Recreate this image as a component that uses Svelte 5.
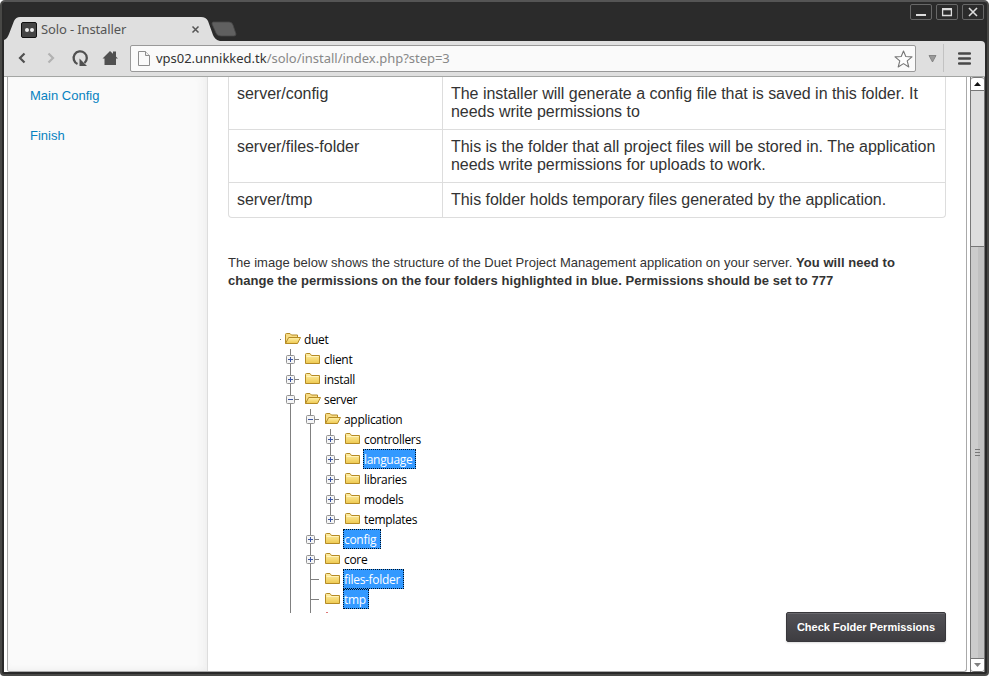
<script>
  const links = ['Main Config', 'Finish'];
  const folders = [
    ['server/config', 'The installer will generate a config file that is saved in this folder. It needs write permissions to'],
    ['server/files-folder', 'This is the folder that all project files will be stored in. The application needs write permissions for uploads to work.'],
    ['server/tmp', 'This folder holds temporary files generated by the application.']
  ];
  // cells: p = plus, m = minus, P = plus on the last child, l = vertical guide, t = branch without a toggle
  const tree = [
    { name: 'duet', cells: '', open: true, w: 24 },
    { name: 'client', cells: 'p', w: 29 },
    { name: 'install', cells: 'p', w: 31 },
    { name: 'server', cells: 'm', open: true, w: 31 },
    { name: 'application', cells: 'lm', open: true, w: 59 },
    { name: 'controllers', cells: 'llp', w: 56 },
    { name: 'language', cells: 'llp', hot: true, w: 49 },
    { name: 'libraries', cells: 'llp', w: 41 },
    { name: 'models', cells: 'llp', w: 39 },
    { name: 'templates', cells: 'llP', w: 52 },
    { name: 'config', cells: 'lp', hot: true, w: 34 },
    { name: 'core', cells: 'lp', w: 23 },
    { name: 'files-folder', cells: 'lt', hot: true, w: 57 },
    { name: 'tmp', cells: 'lt', hot: true, w: 22 }
  ];
</script>

<div class="window">
  <header class="titlebar">
    <svg class="tabs" width="240" height="26" viewBox="0 0 240 26">
      <path d="M0 26V24C3 23 4 20 5 18L10 5Q12 1 16 1H197Q202 1 204 5L209 19Q211 24 216 25V26Z" fill="#dfdfdf" />
      <path d="M209 6H225Q228 6 229 9L232 18Q232 20 230 20H217Q213 20 212 17L208 8Q208 6 209 6Z" fill="#606060" stroke="#484848" stroke-width=".8" />
    </svg>
    <div class="tab">
      <span class="favicon"><i></i><i></i></span>
      <span class="title">Solo - Installer</span>
      <svg width="9" height="9" viewBox="0 0 9 9"><path d="M1.5 1.5 7.5 7.5M7.5 1.5 1.5 7.5" stroke="#555" stroke-width="1.5" /></svg>
    </div>
    <div class="controls">
      <span><svg width="20" height="14"><path d="M5 10H15" stroke="#ddd" stroke-width="2" /></svg></span>
      <span><svg width="20" height="14"><path d="M5.6 4.5H14.4V10.5H5.6Z" fill="none" stroke="#ddd" stroke-width="1.3" /><path d="M5 4H15" stroke="#ddd" stroke-width="2" /></svg></span>
      <span><svg width="20" height="14"><path d="M6 3 14 11M14 3 6 11" stroke="#ddd" stroke-width="1.6" /></svg></span>
    </div>
  </header>

  <div class="toolbar">
    <svg class="nav" width="120" height="35" viewBox="4 41 120 35">
      <path d="M24.500 53.500 20 58 24.500 62.500" fill="none" stroke="#505050" stroke-width="2.200" />
      <path d="M48.500 53.500 53 58 48.500 62.500" fill="none" stroke="#b2b2b2" stroke-width="2.200" />
      <path d="M77.500 64A6.600 6.600 0 1 1 84.500 63" fill="none" stroke="#505050" stroke-width="2.300" />
      <path d="M79.500 58.500V66H87Z" fill="#505050" />
      <path d="M110 51 118 58.500H116V65H104.500V58.500H102.500Z" fill="#505050" />
      <path d="M113 51.500H116V57H113Z" fill="#505050" />
    </svg>
    <div class="address">
      <svg width="12" height="15" viewBox="0 0 12 15"><path d="M.5.5H7.500L11.500 4.500V14.500H.5Z" fill="#fafafa" stroke="#8d8d8d" /><path d="M7.500.5V4.500H11.500" fill="#eee" stroke="#8d8d8d" /></svg>
      <span class="url">vps02.unnikked.tk<em>/solo/install/index.php?step=3</em></span>
      <svg width="20" height="20" viewBox="0 0 20 20"><path d="M10.500 2 12.800 7.500 19 7.900 14.200 11.900 15.800 18 10.500 14.600 5.200 18 6.800 11.900 2 7.900 8.200 7.500Z" fill="#fdfdfd" stroke="#777" stroke-width="1.100" stroke-linejoin="round" /></svg>
    </div>
    <svg class="menu" width="69" height="35" viewBox="916 41 69 35">
      <path d="M929 55.500H936L932.500 62Z" fill="#999" stroke="#777" stroke-width=".8" />
      <path d="M943.500 44V72" stroke="#c2c2c2" />
      <path d="M959.200 53.500H969.800M959.200 58.500H969.800M959.200 63.500H969.800" stroke="#484848" stroke-width="2.600" stroke-linecap="round" />
    </svg>
  </div>

  <div class="view">
    <div class="page">
      <aside>
        {#each links as link}<a href="#top">{link}</a>{/each}
      </aside>
      <main>
        <div class="table">
          {#each folders as [path, text]}
            <div class="tr"><div class="path">{path}</div><div class="desc">{text}</div></div>
          {/each}
        </div>
        <p>The image below shows the structure of the Duet Project Management application on your server. <b>You will need to change the permissions on the four folders highlighted in blue. Permissions should be set to 777</b></p>
        <div class="bottom">
          <div class="tree">
            {#each tree as row}
              <div class="row">
                {#each row.cells as c}
                  <svg width="20" height="20" viewBox="0 0 20 20">
                    <path d={c === 'P' ? 'M10.500 0V10' : 'M10.500 0V20'} stroke="#808080" />
                    {#if c !== 'l'}
                      <path d="M11 10.500H19" stroke="#808080" />
                    {/if}
                    {#if c !== 'l' && c !== 't'}
                      <rect x="6.500" y="6.500" width="8" height="8" rx="1" fill="#f5f5f5" stroke="#929292" />
                      <path d={c === 'm' ? 'M8 10.500H13' : 'M8 10.500H13M10.500 8V13'} stroke="#3c55a0" />
                    {/if}
                  </svg>
                {/each}
                <svg width="23" height="20" viewBox="0 0 23 20">
                  {#if row.name === 'duet'}<path d="M-1 10.500H1" stroke="#777" />{/if}
                  {#if row.open}
                    <path d="M5.500 14.500V5.500Q5.500 4.500 6.500 4.500H10L11.500 6H17.500V9" fill="#f7dc86" stroke="#b58b25" />
                    <path d="M5.500 14.500 8.700 8.500H20.500L17.500 14.500Z" fill="url(#gold)" stroke="#b58b25" stroke-linejoin="round" />
                  {:else}
                    <path d="M5.500 14.500V5.500Q5.500 4.500 6.500 4.500H10L11.500 6.500H19.500V14.500Z" fill="url(#gold)" stroke="#b58b25" stroke-linejoin="round" />
                    <path d="M6.500 7.500H18.500" stroke="#fff3bb" />
                  {/if}
                </svg>
                <span class="label" class:hot={row.hot} style:width="{row.w + 4}px">{row.name}</span>
              </div>
            {/each}
            <div class="row tail">
              <svg width="40" height="4" viewBox="0 0 40 4"><path d="M10.500 0V4M30.500 0V4" stroke="#808080" /></svg>
              <i class="next"></i>
            </div>
          </div>
          <button>Check Folder Permissions</button>
        </div>
      </main>
    </div>
    <div class="scroll">
      <div class="arrow"><svg width="7" height="4"><path d="M0 4 3.500 0 7 4Z" fill="#111" /></svg></div>
      <div class="track"></div>
      <div class="thumb"><i></i><i></i><i></i></div>
      <div class="arrow down"><svg width="7" height="4"><path d="M0 0 3.500 4 7 0Z" fill="#808080" /></svg></div>
    </div>
  </div>
  <svg class="defs" width="0" height="0"><defs><linearGradient id="gold" x2="0" y2="1"><stop stop-color="#fff0ab" /><stop offset="1" stop-color="#eec94f" /></linearGradient></defs></svg>
</div>

<style>
  :global(body) { background: #fff; overflow: hidden; }
  * { box-sizing: border-box; }
  svg { display: block; flex: none; }
  .window { width: 989px; height: 676px; display: flex; flex-direction: column; background: #292929; border: 2px solid #484846; border-top-color: #555; border-radius: 5px 5px 4px 4px; padding: 0 2px 2px; overflow: hidden; font-family: "Noto Sans", sans-serif; }
  .titlebar { height: 39px; flex: none; display: flex; justify-content: space-between; position: relative; background: #2b2b2b; }
  .tabs { position: absolute; left: 0; top: 14px; }
  .tab { position: relative; display: flex; align-items: center; width: 196px; height: 24px; margin-top: 15px; padding-left: 17px; color: #555; font-size: 13px; }
  .favicon { width: 16px; height: 16px; margin-top: 1px; border: 1px solid #111; border-radius: 2px; background: #444; display: flex; align-items: center; justify-content: center; gap: 1px; }
  .favicon i { width: 4px; height: 4px; border-radius: 50%; background: #eee; }
  .title { flex: 1; margin-left: 4px; white-space: nowrap; letter-spacing: -.13px; }
  .controls { display: flex; gap: 4px; margin: 2px 1px 0 0; }
  .controls span { width: 22px; height: 16px; border: 1px solid #686868; border-radius: 2px; }
  .toolbar { height: 36px; flex: none; display: flex; background: #dfdfdf; border-bottom: 1px solid #a4a6a4; border-radius: 0 4px 0 0; }
  .nav { margin-right: 6px; }
  .address { width: 786px; height: 27px; margin-top: 4px; display: flex; align-items: center; padding: 0 2px 0 7px; border: 1px solid #999; border-radius: 2px; background: #fafafa; }
  .url { flex: 1; margin: -2px 0 0 6px; color: #333; font-size: 13px; letter-spacing: -.02px; white-space: nowrap; }
  .url em { font-style: normal; color: #888; }
  .view { flex: 1; min-height: 0; display: flex; background: #fff; padding-left: 3px; }
  .page { width: 960px; display: flex; border: 1px solid #aaa; border-top: 0; border-radius: 0 0 3px 3px; background: #fff; font-family: "Liberation Sans", Arial, sans-serif; overflow: hidden; }
  aside { width: 200px; flex: none; display: flex; flex-direction: column; gap: 22px; padding: 10px 22px; background: #fafafa; border-right: 1px solid #ddd; box-shadow: inset -8px 0 10px -5px #eee, inset 0 -4px 6px -3px #eee; }
  aside a { color: #0782c1; text-decoration: none; font-size: 13px; line-height: 18px; }
  main { width: 758px; padding: 0 20px; display: flex; flex-direction: column; }
  .table { width: 718px; height: 141px; border: 1px solid #ddd; border-top: 0; border-radius: 0 0 4px 4px; color: #333; font-size: 16px; line-height: 18px; letter-spacing: -.025px; }
  .tr { display: flex; height: 53px; border-bottom: 1px solid #ddd; }
  .tr:last-child { height: 34px; border: 0; }
  .path { width: 213px; flex: none; padding: 8px; }
  .desc { flex: 1; border-left: 1px solid #ddd; padding: 8px 4px 8px 8px; }
  p { margin: 36px 0 0; padding-right: 30px; color: #333; font-size: 13px; line-height: 18px; letter-spacing: .03px; }
  p b { letter-spacing: .06px; }
  .bottom { display: flex; justify-content: space-between; align-items: flex-end; margin-top: 39px; height: 313px; }
  .tree { height: 284px; margin-left: 52px; align-self: flex-start; overflow: hidden; }
  .row { height: 20px; display: flex; }
  .row.tail { height: 4px; align-items: flex-end; }
  .label { height: 20px; border: 1px solid transparent; font: 12px/20px "Open Sans", sans-serif; letter-spacing: -.3px; color: #000; white-space: nowrap; }
  .hot { background: #3399ff; border: 1px dotted #012; color: #fff; }
  .next { margin-left: 6px; width: 2px; height: 1px; background: #d77; }
  button { width: 160px; height: 30px; padding: 0; border: 1px solid #38373b; border-radius: 2px; background: linear-gradient(#535257, #3e3d41); box-shadow: inset 0 1px #69686d, 0 1px 2px #ddd; color: #fff; font: bold 11px "Liberation Sans", sans-serif; }
  .scroll { width: 15px; margin-left: 3px; display: flex; flex-direction: column; border: 1px solid #777; border-width: 0 1px; background: #ddd; }
  .arrow { height: 14px; flex: none; display: flex; align-items: center; justify-content: center; background: #fff; border: solid #777; border-width: 1px 0; border-radius: 3px 3px 0 0; }
  .down { border-radius: 0 0 3px 3px; }
  .track { height: 155px; flex: none; }
  .thumb { flex: 1; display: flex; flex-direction: column; align-items: center; justify-content: center; gap: 2px; border-top: 1px solid #777; background: linear-gradient(90deg, #ccc 55%, #c1c1c1 55%); }
  .thumb i { width: 5px; height: 1px; background: #777; }
  .defs { position: absolute; }
</style>
